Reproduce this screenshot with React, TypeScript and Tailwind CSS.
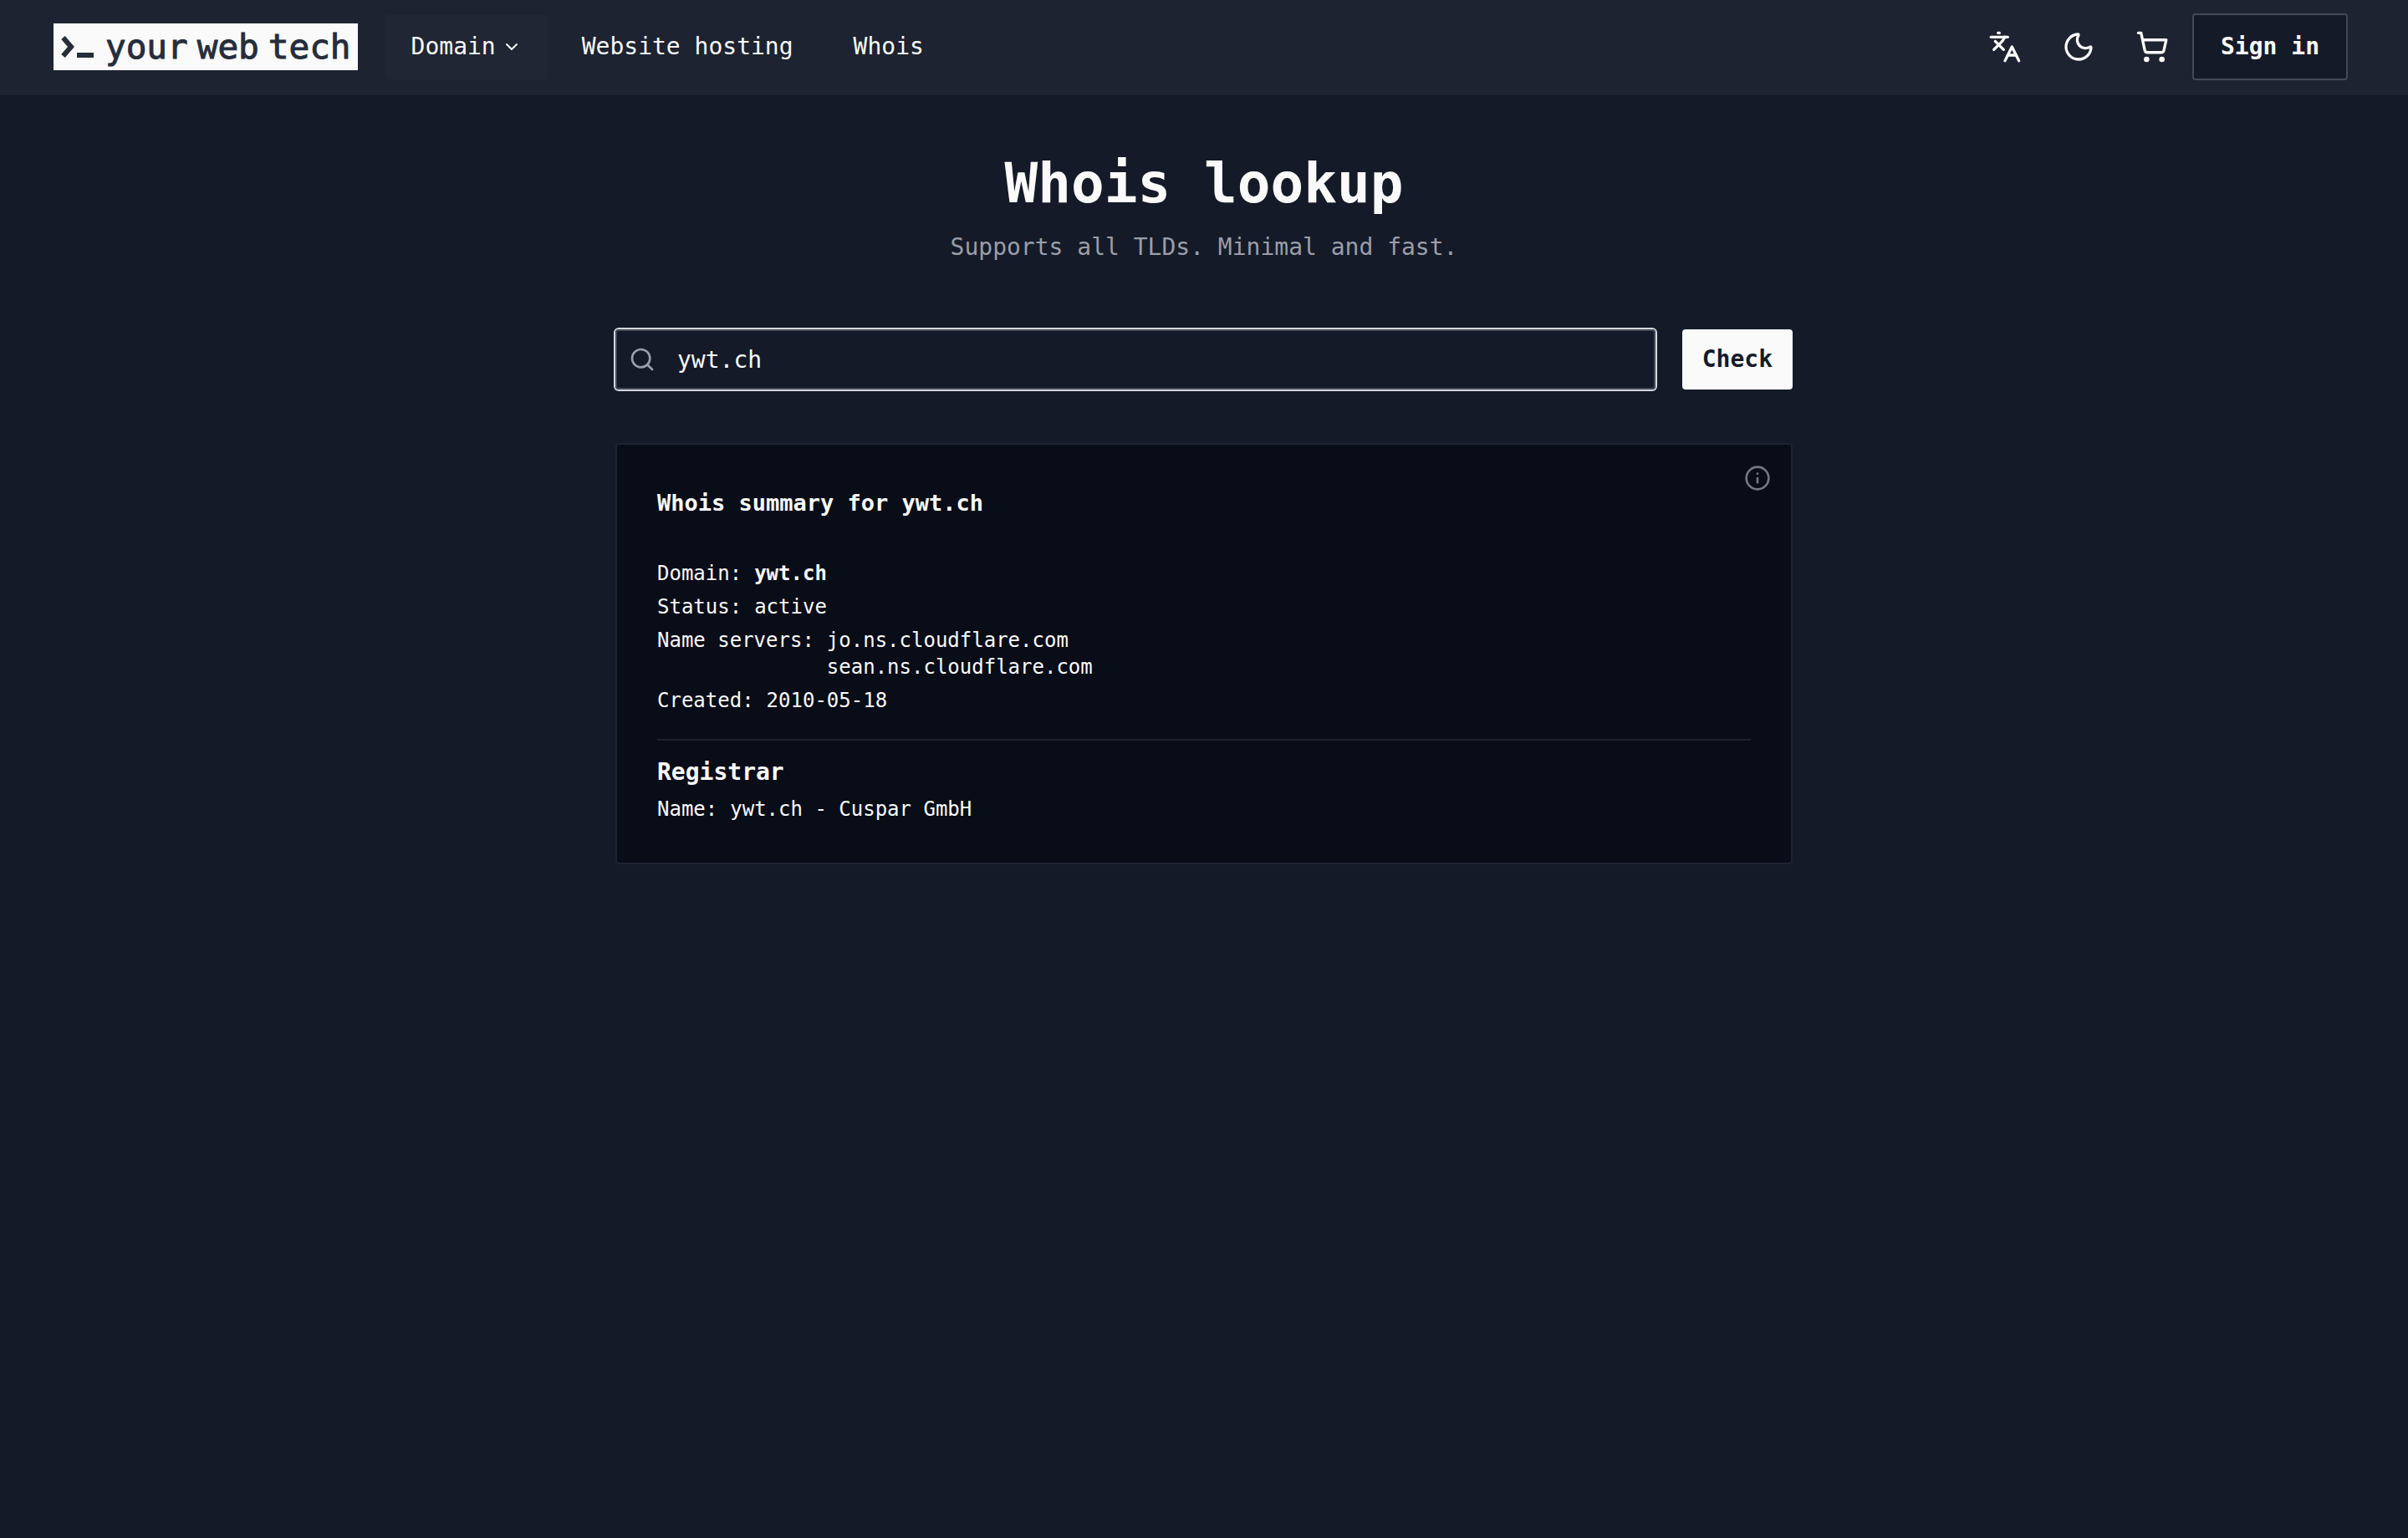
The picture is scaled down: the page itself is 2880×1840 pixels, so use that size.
import { useState, type ReactNode } from "react";
import { ChevronDown, Info, Languages, Moon, Search, ShoppingCart } from "lucide-react";

function Logo() {
  return (
    <a
      href="#home"
      aria-label="your web tech"
      className="flex h-14 shrink-0 items-center gap-3 bg-[#fafafa] px-2 text-[#262d3b]"
    >
      <svg width="42" height="56" viewBox="0 0 42 56" fill="none" aria-hidden="true">
        <path d="M3.5 17 13 28 3.5 39" stroke="currentColor" strokeWidth="6" />
        <rect x="20" y="35" width="20" height="6" fill="currentColor" />
      </svg>
      <span className="flex items-center gap-[11px] text-[41px] leading-[48px] [-webkit-text-stroke:1px_currentColor]">
        <span>your</span>
        <span>web</span>
        <span>tech</span>
      </span>
    </a>
  );
}

function IconButton({ label, children }: { label: string; children: ReactNode }) {
  return (
    <button type="button" aria-label={label} className="flex size-20 items-center justify-center rounded">
      {children}
    </button>
  );
}

function Header() {
  return (
    <header className="flex items-center justify-between border-b-2 border-[#1d2330] bg-[#1d2330] py-4 pr-[72px] pl-16 text-[28px] leading-10">
      <div className="flex items-center gap-8">
        <Logo />
        <nav className="flex items-center gap-2">
          <button
            type="button"
            className="flex h-[78px] items-center gap-[7px] rounded bg-[#202633] px-8 font-medium"
          >
            Domain
            <ChevronDown size={24} />
          </button>
          <a href="#hosting" className="px-8 font-medium">
            Website hosting
          </a>
          <a href="#whois" className="px-8 font-medium">
            Whois
          </a>
        </nav>
      </div>
      <div className="flex items-center gap-2">
        <IconButton label="Change language">
          <Languages size={40} />
        </IconButton>
        <IconButton label="Toggle theme">
          <Moon size={40} />
        </IconButton>
        <IconButton label="Cart">
          <ShoppingCart size={40} />
        </IconButton>
        <button
          type="button"
          className="h-20 rounded border-2 border-[#434956] bg-[#151a28] px-8 font-semibold"
        >
          Sign in
        </button>
      </div>
    </header>
  );
}

function Row({ label, children }: { label: string; children: ReactNode }) {
  return (
    <div className="flex gap-[15px]">
      <dt className="font-medium">{label}:</dt>
      <dd>{children}</dd>
    </div>
  );
}

export default function App() {
  const [query, setQuery] = useState("ywt.ch");

  return (
    <div className="min-h-screen bg-[#151a28] font-['DejaVu_Sans_Mono','Liberation_Mono',monospace] text-[#fafafa]">
      <Header />
      <main className="mx-auto max-w-[1408px] pt-[66px]">
        <div className="text-center">
          <h1 className="text-[66px] leading-[80px] font-bold">Whois lookup</h1>
          <p className="mt-4 text-[28px] leading-10 text-[#9a9ea8]">Supports all TLDs. Minimal and fast.</p>
        </div>

        <form className="mt-[78px] flex gap-8" onSubmit={(e) => e.preventDefault()}>
          <div className="relative flex-1">
            <Search size={32} className="absolute top-5 left-4 text-[#9a9ea8]" />
            <input
              type="text"
              aria-label="Domain name"
              value={query}
              onChange={(e) => setQuery(e.target.value)}
              className="h-[72px] w-full rounded border-2 border-[#454b57] bg-transparent pr-4 pl-[72px] text-[28px] leading-10 ring-2 ring-[#d4d7db] outline-none"
            />
          </div>
          <button
            type="submit"
            className="h-[72px] rounded bg-[#fafafa] px-6 text-[28px] leading-10 font-semibold text-[#151a28]"
          >
            Check
          </button>
        </form>

        <section className="relative mt-16 rounded border-2 border-[#1d2330] bg-[#090d18] px-12 pt-[50px] pb-12">
          <button type="button" aria-label="About this result" className="absolute top-6 right-6 text-[#74777f]">
            <Info size={32} />
          </button>
          <h2 className="text-[27px] leading-10 font-semibold">Whois summary for ywt.ch</h2>
          <dl className="mt-12 flex flex-col gap-2 text-[24px] leading-8">
            <Row label="Domain">
              <strong>ywt.ch</strong>
            </Row>
            <Row label="Status">active</Row>
            <Row label="Name servers">
              <ul>
                <li>jo.ns.cloudflare.com</li>
                <li>sean.ns.cloudflare.com</li>
              </ul>
            </Row>
            <Row label="Created">2010-05-18</Row>
          </dl>
          <hr className="mt-[30px] border-t-2 border-[#1d2330]" />
          <h3 className="mt-[18px] text-[28px] leading-10 font-semibold">Registrar</h3>
          <dl className="mt-2 text-[24px] leading-8">
            <Row label="Name">ywt.ch - Cuspar GmbH</Row>
          </dl>
        </section>
      </main>
    </div>
  );
}
